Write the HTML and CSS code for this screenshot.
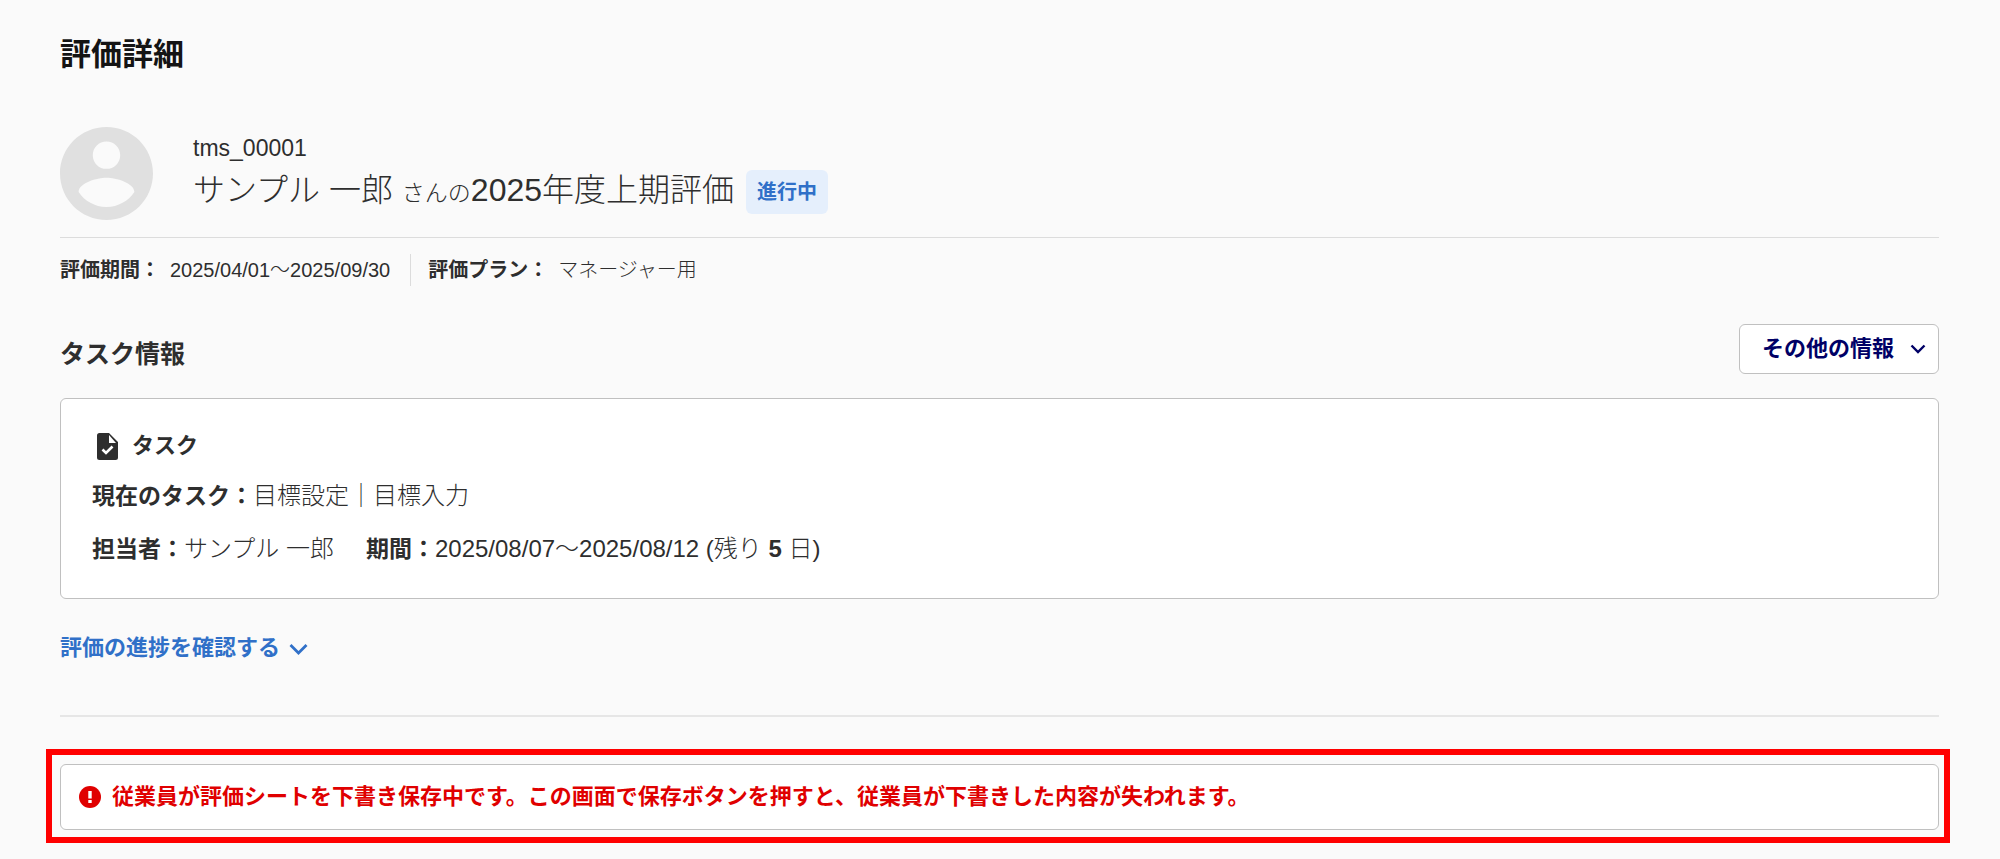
FILE: index.html
```html
<!DOCTYPE html>
<html lang="ja">
<head>
<meta charset="utf-8">
<meta name="viewport" content="width=device-width, initial-scale=1">
<title>評価詳細</title>
<link rel="stylesheet" href="styles.css">
</head>
<body>
<main class="page">
  <h1 class="page-title">評価詳細</h1>

  <header class="profile">
    <svg class="avatar" viewBox="2 2 20 20" aria-hidden="true"><path d="M12 2C6.48 2 2 6.48 2 12s4.48 10 10 10 10-4.48 10-10S17.52 2 12 2zm0 3.1c1.63 0 2.95 1.32 2.95 2.95S13.63 11 12 11 9.050 9.680 9.050 8.050 10.370 5.100 12 5.100zm0 14.100c-2.500 0-4.710-1.280-6-3.220.03-1.990 4-3.080 6-3.080 1.990 0 5.970 1.090 6 3.080-1.290 1.940-3.500 3.220-6 3.220z"/></svg>
    <div class="profile-text">
      <p class="profile-id">tms_00001</p>
      <div class="profile-line">
        <p class="profile-name">サンプル 一郎 <span class="profile-suffix">さんの</span>2025年度上期評価</p>
        <span class="badge">進行中</span>
      </div>
    </div>
  </header>

  <dl class="meta">
    <div class="meta-item"><dt>評価期間：</dt><dd>2025/04/01～2025/09/30</dd></div>
    <div class="meta-item"><dt>評価プラン：</dt><dd>マネージャー用</dd></div>
  </dl>

  <div class="section-head">
    <h2 class="section-title">タスク情報</h2>
    <button class="more-button" type="button">その他の情報
      <svg class="more-chevron" viewBox="0 0 16 10" aria-hidden="true"><path d="M1.500 1.500 8 8l6.500-6.500"/></svg>
    </button>
  </div>

  <section class="card">
    <h3 class="card-title">
      <svg class="task-icon" viewBox="0 0 21 27" aria-hidden="true"><path class="sheet" d="M2.500 0H12l9 9v15.500a2.500 2.500 0 0 1-2.500 2.500h-16A2.500 2.500 0 0 1 0 24.500v-22A2.500 2.500 0 0 1 2.500 0z"/><path class="fold" d="M12 2v8h7z"/><path class="tick" d="m5.500 16.500 3.500 3.500 6.500-6.500"/></svg>
      タスク
    </h3>
    <p class="card-row"><strong>現在のタスク：</strong>目標設定｜目標入力</p>
    <p class="card-row"><span><strong>担当者：</strong>サンプル 一郎</span><span class="period"><strong>期間：</strong>2025/08/07～2025/08/12 (残り <b>5</b> 日)</span></p>
  </section>

  <button class="progress-toggle" type="button">評価の進捗を確認する
    <svg class="progress-chevron" viewBox="0 0 19 13" aria-hidden="true"><path d="m1.500 3 8 8 8-8"/></svg>
  </button>

  <hr class="divider">

  <div class="highlight">
    <div class="alert" role="alert">
      <svg class="alert-icon" viewBox="0 0 22 22" aria-hidden="true"><circle cx="11" cy="11" r="11"/><path d="M9.300 5h3.400v7.500H9.300zM9.300 14h3.400v3H9.300z"/></svg>
      <p class="alert-text">従業員が評価シートを下書き保存中です。この画面で保存ボタンを押すと、従業員が下書きした内容が失われます。</p>
    </div>
  </div>
</main>
</body>
</html>
```

FILE: styles.css
```css
* {
  box-sizing: border-box;
}

body {
  margin: 0;
  background: #fafafa;
  color: #2e2e2e;
  font-family: "Liberation Sans", "Noto Sans CJK JP", sans-serif;
  font-size: 20px;
  font-weight: 300;
  line-height: 32px;
}

h1, h2, h3, p, dl, dd {
  margin: 0;
}

strong, b {
  font-weight: 700;
}

button {
  font: inherit;
  font-weight: 700;
  cursor: pointer;
}

.page {
  padding: 35px 61px 14px 60px;
}

.page-title {
  color: #141414;
  font-size: 31px;
  line-height: 40px;
}

.profile {
  display: flex;
  align-items: center;
  gap: 40px;
  margin-top: 52px;
  padding-bottom: 17px;
  border-bottom: 1px solid #dcdcdc;
}

.avatar {
  flex: none;
  width: 93px;
  height: 93px;
  fill: #e0e0e0;
}

.profile-id {
  font-size: 23px;
}

.profile-line {
  display: flex;
  align-items: center;
  gap: 12px;
  margin-top: 4px;
}

.profile-name {
  font-size: 32px;
  line-height: 44px;
}

.profile-suffix {
  font-size: 23px;
}

.badge {
  padding: 6px 11px;
  border-radius: 6px;
  background: #e5effc;
  color: #3070c8;
  font-weight: 700;
  white-space: nowrap;
}

.meta {
  display: flex;
  margin-top: 16px;
}

.meta-item {
  display: flex;
  gap: 10px;
}

.meta-item + .meta-item {
  margin-left: 20px;
  padding-left: 17px;
  border-left: 1px solid #dcdcdc;
}

.meta dt {
  font-weight: 700;
}

.section-head {
  display: flex;
  align-items: flex-end;
  justify-content: space-between;
  margin-top: 38px;
}

.section-title {
  font-size: 25px;
  line-height: 40px;
}

.more-button {
  display: flex;
  align-items: center;
  gap: 16px;
  height: 50px;
  padding: 0 12px 0 22px;
  border: 1px solid #c0c0c0;
  border-radius: 6px;
  background: #fff;
  color: #000066;
  font-size: 22px;
}

.more-chevron,
.progress-chevron {
  fill: none;
  stroke: currentColor;
}

.more-chevron {
  width: 16px;
  height: 10px;
  stroke-width: 2.4;
}

.card {
  margin-top: 24px;
  padding: 31px 31px 33px;
  border: 1px solid #c0c0c0;
  border-radius: 6px;
  background: #fff;
}

.card-title {
  display: flex;
  align-items: center;
  gap: 14px;
  padding-left: 5px;
  font-size: 22px;
}

.task-icon {
  width: 21px;
  height: 27px;
}

.sheet {
  fill: #2e2e2e;
}

.fold {
  fill: #fff;
}

.tick {
  fill: none;
  stroke: #fff;
  stroke-width: 2.6;
}

.card-row {
  margin-top: 18px;
  font-size: 24px;
}

.card-row + .card-row {
  margin-top: 21px;
}

.card-row strong {
  font-size: 23px;
}

.period {
  margin-left: 32px;
}

.progress-toggle {
  display: flex;
  align-items: center;
  gap: 9px;
  margin-top: 33px;
  padding: 0;
  border: 0;
  background: none;
  color: #3070c8;
  font-size: 22px;
  line-height: 32px;
}

.progress-chevron {
  width: 19px;
  height: 13px;
  stroke-width: 2.8;
}

.divider {
  height: 2px;
  margin: 51px 0 32px;
  border: 0;
  background: #e6e6e6;
}

.highlight {
  margin: 0 -11px 0 -14px;
  padding: 9px 5px 7px 8px;
  border: 6px solid #ff0000;
}

.alert {
  display: flex;
  align-items: center;
  gap: 11px;
  padding: 16px 18px;
  border: 1px solid #c0c0c0;
  border-radius: 6px;
  background: #fff;
  color: #e00000;
}

.alert-icon {
  flex: none;
  width: 22px;
  height: 22px;
  fill: #e00000;
}

.alert-icon path {
  fill: #fff;
}

.alert-text {
  font-size: 22px;
  font-weight: 700;
}
```
